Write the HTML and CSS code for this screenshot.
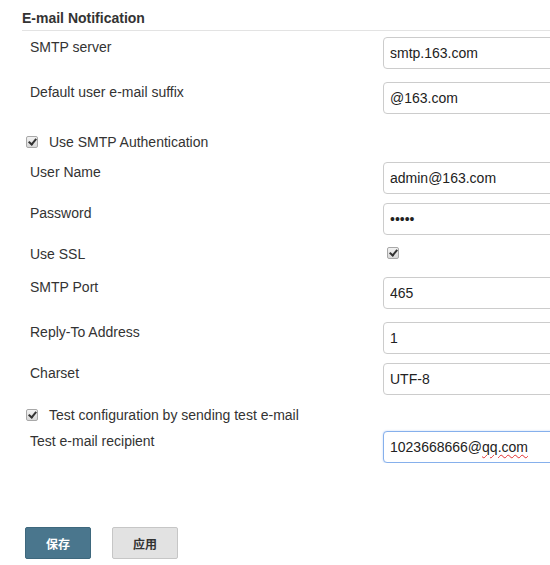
FILE: index.html
```html
<!DOCTYPE html>
<html>
<head>
<meta charset="utf-8">
<link rel="stylesheet" href="styles.css">
</head>
<body>
<div class="page">
  <h2 class="section-title">E-mail Notification</h2>
  <div class="form">
    <div class="row row--spaced">
      <label class="label">SMTP server</label>
      <input class="field" type="text" value="smtp.163.com">
    </div>
    <div class="row row--wide">
      <label class="label">Default user e-mail suffix</label>
      <input class="field" type="text" value="@163.com">
    </div>
    <div class="check-row check-row--auth">
      <input class="checkbox" type="checkbox" checked>
      <span class="check-label">Use SMTP Authentication</span>
    </div>
    <div class="row">
      <label class="label">User Name</label>
      <input class="field" type="text" value="admin@163.com">
    </div>
    <div class="row">
      <label class="label">Password</label>
      <input class="field" type="password" value="admin">
    </div>
    <div class="row row--spaced">
      <label class="label">Use SSL</label>
      <div class="cell"><input class="checkbox checkbox--cell" type="checkbox" checked></div>
    </div>
    <div class="row row--spaced">
      <label class="label">SMTP Port</label>
      <input class="field" type="text" value="465">
    </div>
    <div class="row">
      <label class="label">Reply-To Address</label>
      <input class="field" type="text" value="1">
    </div>
    <div class="row row--last">
      <label class="label">Charset</label>
      <input class="field" type="text" value="UTF-8">
    </div>
    <div class="check-row check-row--test">
      <input class="checkbox" type="checkbox" checked>
      <span class="check-label">Test configuration by sending test e-mail</span>
    </div>
    <div class="row row--final">
      <label class="label">Test e-mail recipient</label>
      <div class="field field--focus">1023668666@<span class="misspelled">qq.com</span></div>
    </div>
  </div>
  <div class="buttons">
    <button class="btn btn--primary">保存</button>
    <button class="btn btn--secondary">应用</button>
  </div>
</div>
</body>
</html>
```

FILE: styles.css
```css
html, body {
  margin: 0;
  padding: 0;
  overflow: hidden;
  background: #fff;
}

body {
  font-family: "Liberation Sans", Arial, sans-serif;
  font-size: 14px;
  color: #333;
}

.page {
  padding-left: 22px;
  overflow: hidden;
}

.section-title {
  margin: 8px 0 0 0;
  padding-bottom: 2px;
  font-size: 14px;
  line-height: 20px;
  font-weight: bold;
  color: #333;
  border-bottom: 1px solid #e3e3e3;
}

.form {
  margin-top: 6px;
  overflow: hidden;
}

.row {
  display: grid;
  grid-template-columns: 353px 200px;
  padding-left: 8px;
  margin-bottom: 9px;
}

.row--spaced {
  margin-bottom: 13px;
}

.row--wide {
  margin-bottom: 18px;
}

.row--last {
  margin-bottom: 10px;
}

.row--final {
  margin-bottom: 0;
}

.label {
  line-height: 20px;
  color: #333;
}

.cell {
  height: 20px;
}

.field {
  box-sizing: border-box;
  width: 200px;
  height: 32px;
  margin: 0;
  padding: 0 6px;
  border: 1px solid #cccccc;
  border-radius: 4px;
  font-family: "Liberation Sans", Arial, sans-serif;
  font-size: 14px;
  color: #222;
  background: #fff;
  outline: none;
}

div.field {
  line-height: 30px;
}

.field--focus {
  border-color: #86b0ec;
  box-shadow: 0 0 2px rgba(102, 150, 230, 0.45);
}

.misspelled {
  text-decoration: underline wavy #e23030;
  text-decoration-thickness: 1px;
  text-underline-offset: 2px;
}

.check-row {
  display: flex;
  align-items: center;
  line-height: 20px;
  margin-bottom: 10px;
}

.check-row--test {
  margin-bottom: 6px;
}

.check-label {
  color: #333;
}

.checkbox {
  appearance: none;
  -webkit-appearance: none;
  position: relative;
  box-sizing: border-box;
  width: 12px;
  height: 12px;
  margin: 0 11px 0 4px;
  border: 1px solid #a8a8a8;
  border-radius: 2px;
  background: linear-gradient(#f2f2f2, #d8d8d8);
}

.checkbox:checked::after {
  content: "";
  position: absolute;
  left: 3px;
  top: 0px;
  width: 3px;
  height: 6px;
  border-right: 2px solid #333;
  border-bottom: 2px solid #333;
  transform: rotate(40deg);
}

.checkbox--cell {
  margin: 3px 0 0 4px;
}

.buttons {
  display: flex;
  gap: 21px;
  margin-top: 64px;
  padding-left: 3px;
}

.btn {
  box-sizing: border-box;
  width: 66px;
  height: 32px;
  border-radius: 2px;
  font-family: "Noto Sans CJK SC", "Liberation Sans", sans-serif;
  font-size: 12px;
  font-weight: bold;
  cursor: pointer;
  padding: 0;
}

.btn--primary {
  background: #4a768d;
  border: 1px solid #3e687d;
  color: #fff;
}

.btn--secondary {
  background: #e2e2e2;
  border: 1px solid #c6c6c6;
  color: #333;
}
```
